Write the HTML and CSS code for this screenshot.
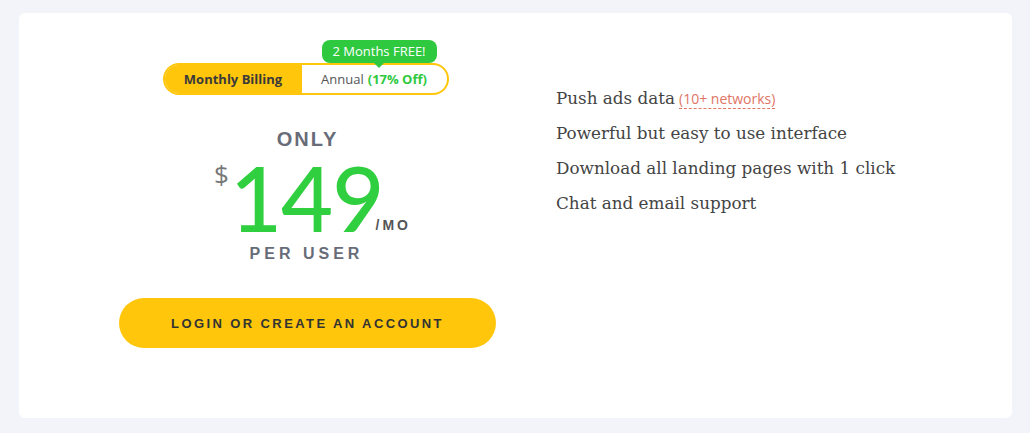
FILE: index.html
```html
<!DOCTYPE html>
<html>
<head>
<meta charset="utf-8">
<link rel="stylesheet" href="styles.css">
</head>
<body>
<div class="card">
  <div class="plan">
    <div class="toggle-wrap">
      <div class="badge">2 Months FREE!</div>
      <div class="toggle">
        <div class="opt opt-active">Monthly Billing</div>
        <div class="opt opt-annual">Annual <b class="off">(17% Off)</b></div>
      </div>
    </div>
    <div class="only">ONLY</div>
    <div class="price">
      <span class="cur">$</span><span class="amount">149</span><span class="per">/MO</span>
    </div>
    <div class="peruser">PER USER</div>
    <a class="cta">LOGIN OR CREATE AN ACCOUNT</a>
  </div>
  <ul class="features">
    <li>Push ads data<span class="note">(10+ networks)</span></li>
    <li>Powerful but easy to use interface</li>
    <li>Download all landing pages with 1 click</li>
    <li>Chat and email support</li>
  </ul>
</div>
</body>
</html>
```
FILE: styles.css
```css
html, body { margin: 0; padding: 0; }
body {
  background: #f3f4f9;
  padding: 13px 18px 15px 19px;
  font-family: "Open Sans", sans-serif;
}
.card {
  background: #fff;
  border-radius: 6px;
  height: 405px;
  box-sizing: border-box;
  padding: 27px 0 0 100px;
  display: flex;
  gap: 60px;
}
.plan {
  width: 377px;
  display: flex;
  flex-direction: column;
  align-items: center;
}
.toggle-wrap {
  position: relative;
  padding-top: 23px;
  margin-left: -4px;
}
.badge {
  position: absolute;
  top: 0;
  left: 159px;
  width: 115px;
  height: 23px;
  line-height: 23px;
  background: #2fc940;
  color: #fff;
  font-size: 13px;
  text-align: center;
  border-radius: 8px;
}
.badge::after {
  content: "";
  position: absolute;
  left: 50%;
  bottom: -5px;
  margin-left: -5px;
  border-left: 5px solid transparent;
  border-right: 5px solid transparent;
  border-top: 5px solid #2fc940;
}
.toggle {
  display: flex;
  width: 286px;
  height: 32px;
  box-sizing: border-box;
  border: 2px solid #ffc60b;
  border-radius: 16px;
  overflow: hidden;
  font-size: 13px;
}
.opt {
  display: flex;
  align-items: center;
  justify-content: center;
}
.opt-active {
  width: 137px;
  background: #ffc60b;
  color: #3a3a3a;
  font-weight: 700;
}
.opt-annual {
  flex: 1;
  color: #555;
}
.off { color: #2fc940; margin-left: 4px; font-weight: 700; }
.only {
  margin-top: 34px;
  font-family: "Liberation Sans", sans-serif;
  font-weight: 700;
  font-size: 20px;
  letter-spacing: 2px;
  color: #676c78;
  line-height: 20px;
}
.price {
  display: flex;
  align-items: flex-start;
  height: 84px;
  margin-top: 6px;
  margin-left: 10px;
}
.cur {
  font-family: "Open Sans", sans-serif;
  font-size: 26px;
  line-height: 30px;
  color: #777;
  margin-top: 4px;
  margin-right: 1px;
}
.amount {
  font-family: "Lato", sans-serif;
  font-weight: 500;
  font-size: 90px;
  line-height: 84px;
  color: #2fcf3f;
  letter-spacing: -1px;
}
.per {
  align-self: flex-end;
  font-family: "Liberation Sans", sans-serif;
  font-weight: 700;
  font-size: 14px;
  line-height: 16px;
  letter-spacing: 3px;
  color: #555;
  margin-left: -8px;
  margin-bottom: 6px;
}
.peruser {
  margin-top: 6px;
  font-family: "Liberation Sans", sans-serif;
  font-weight: 700;
  font-size: 16px;
  line-height: 18px;
  letter-spacing: 4px;
  color: #676c78;
  margin-left: -2px;
}
.cta {
  margin-top: 35px;
  width: 377px;
  height: 50px;
  border-radius: 25px;
  background: #ffc60b;
  display: flex;
  align-items: center;
  justify-content: center;
  font-family: "Liberation Sans", sans-serif;
  font-weight: 700;
  font-size: 13px;
  letter-spacing: 2.4px;
  color: #333;
}
.features {
  list-style: none;
  margin: 0;
  padding: 41px 0 0 0;
  font-family: "DejaVu Serif", serif;
  font-size: 16.8px;
  color: #444;
}
.features li {
  line-height: 35px;
}
.note {
  font-family: "Open Sans", sans-serif;
  font-size: 14px;
  color: #e07565;
  border-bottom: 1px dashed #e07565;
  margin-left: 4px;
}
```
